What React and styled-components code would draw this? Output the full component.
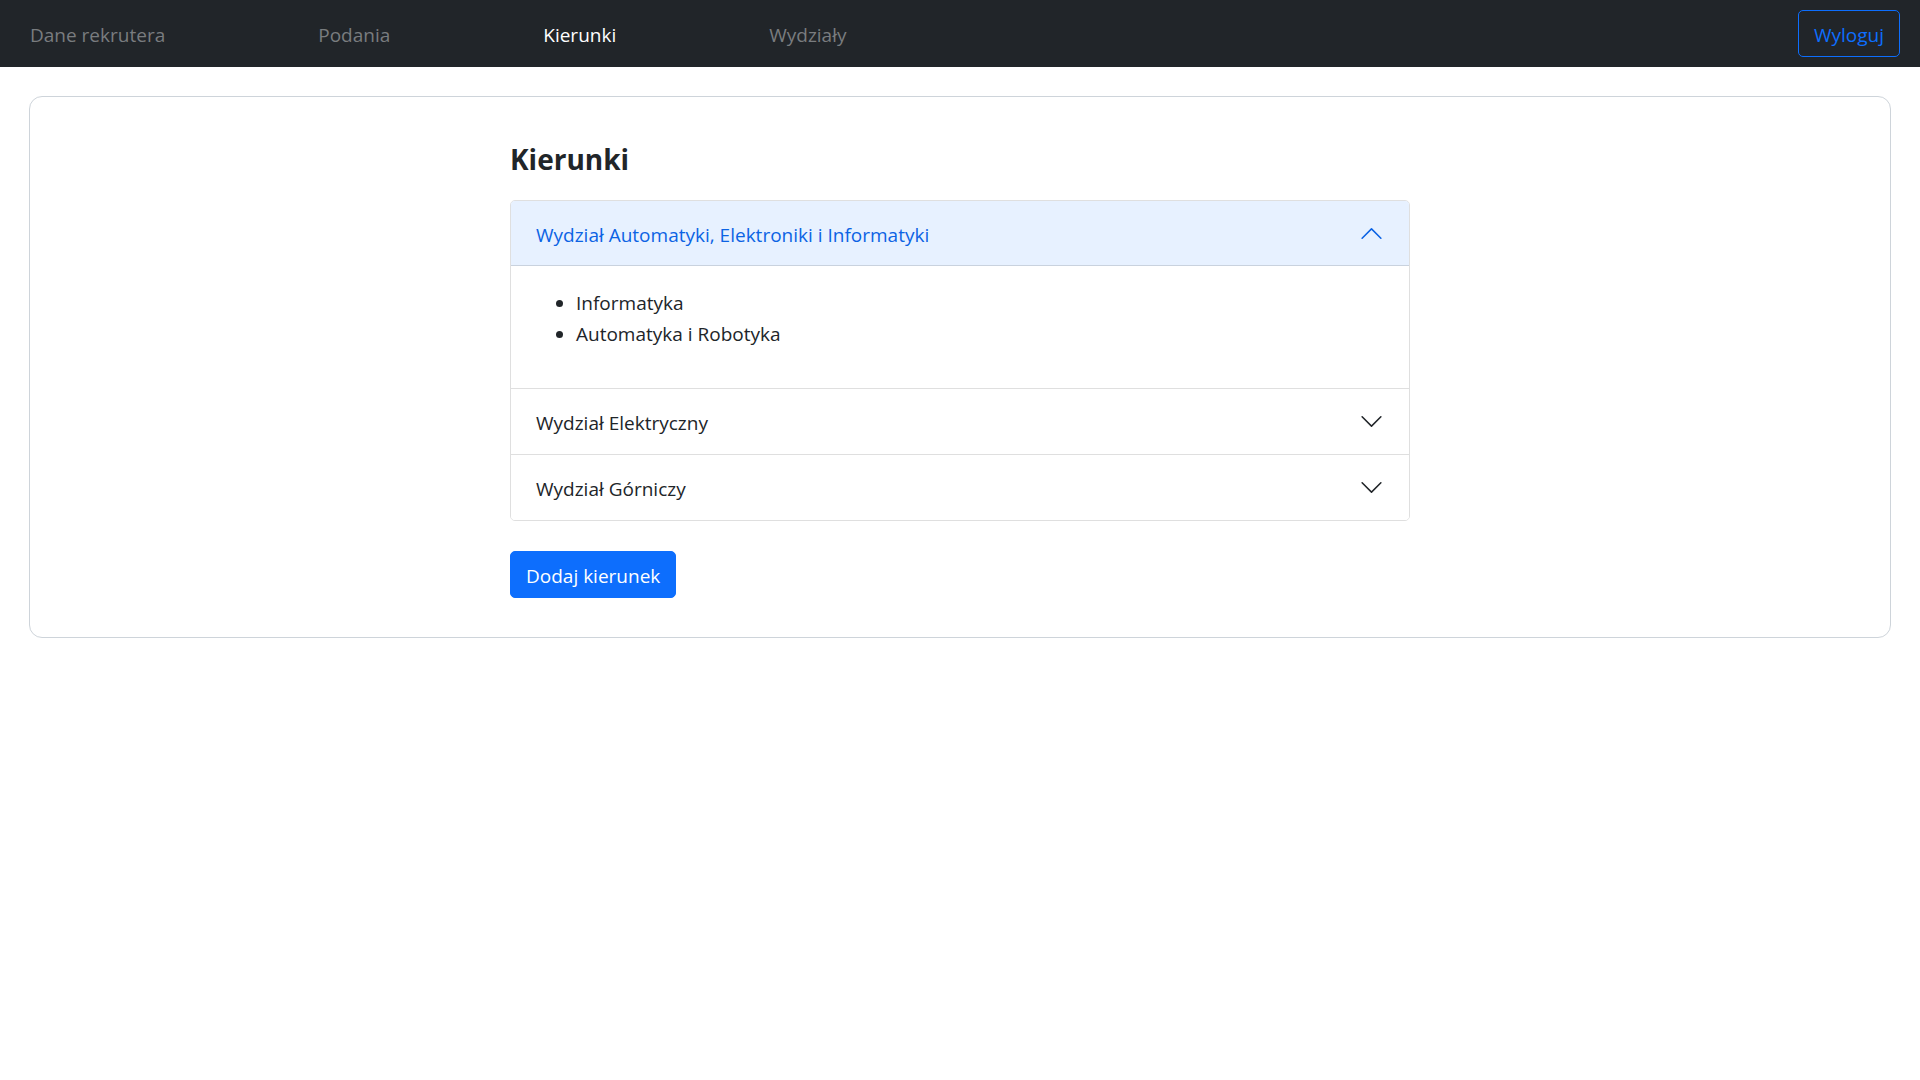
import React, { useState } from "react";
import styled, { createGlobalStyle } from "styled-components";

const GlobalStyle = createGlobalStyle`
  *, *::before, *::after { box-sizing: border-box; }
  body {
    margin: 0;
    background: #fff;
    color: #212529;
    font: 400 19px/31px "Open Sans", "Noto Sans", sans-serif;
  }
`;

const Navbar = styled.header`
  display: flex;
  align-items: center;
  justify-content: space-between;
  padding: 10px 20px 10px 30px;
  background: #212529;
`;

const NavList = styled.nav`
  display: flex;
  gap: 153px;
  padding-top: 3px;
`;

const NavLink = styled.a`
  color: ${({ $active }) => ($active ? "#fff" : "#797c7f")};
  text-decoration: none;
`;

const Button = styled.button`
  padding: 9px 15px 5px;
  border: 1px solid #0d6efd;
  border-radius: 5px;
  background: ${({ $outline }) => ($outline ? "transparent" : "#0d6efd")};
  color: ${({ $outline }) => ($outline ? "#0d6efd" : "#fff")};
  font: inherit;
  cursor: pointer;
`;

const Card = styled.main`
  margin: 29px;
  padding: 40px 24px 39px;
  border: 1px solid #ced4da;
  border-radius: 13px;
`;

const Content = styled.div`
  max-width: 900px;
  margin: 0 auto;
`;

const Title = styled.h1`
  margin: 0 0 19px;
  font-size: 28px;
  line-height: 44px;
  font-weight: 700;
`;

const Accordion = styled.div`
  margin-bottom: 30px;
  border: 1px solid #dfdfdf;
  border-radius: 5px;
  overflow: hidden;
`;

const Item = styled.section`
  & + & { border-top: 1px solid #dfdfdf; }
`;

const ItemHeading = styled.h2`
  margin: 0;
  font: inherit;
`;

const ItemButton = styled.button`
  display: flex;
  align-items: flex-start;
  justify-content: space-between;
  width: 100%;
  padding: 19px 25px 15px;
  border: 0;
  background: ${({ $open }) => ($open ? "#e7f1ff" : "#fff")};
  box-shadow: ${({ $open }) => ($open ? "inset 0 -1px 0 #c9d2de" : "none")};
  color: ${({ $open }) => ($open ? "#0c63e4" : "#212529")};
  font: inherit;
  text-align: left;
  cursor: pointer;
`;

const Chevron = styled.svg`
  width: 25px;
  height: 25px;
  margin-top: 1px;
  fill: currentColor;
  transform: ${({ $open }) => ($open ? "rotate(180deg)" : "none")};
`;

const CourseList = styled.ul`
  margin: 0;
  padding: 22px 25px 38px 65px;
`;

const links = ["Dane rekrutera", "Podania", "Kierunki", "Wydziały"];

const faculties = [
  {
    name: "Wydział Automatyki, Elektroniki i Informatyki",
    courses: ["Informatyka", "Automatyka i Robotyka"],
  },
  { name: "Wydział Elektryczny", courses: [] },
  { name: "Wydział Górniczy", courses: [] },
];

export default function App() {
  const [openIndex, setOpenIndex] = useState(0);

  return (
    <>
      <GlobalStyle />
      <Navbar>
        <NavList>
          {links.map((label) => (
            <NavLink key={label} href="#" $active={label === "Kierunki"}>
              {label}
            </NavLink>
          ))}
        </NavList>
        <Button type="button" $outline>Wyloguj</Button>
      </Navbar>
      <Card>
        <Content>
          <Title>Kierunki</Title>
          <Accordion>
            {faculties.map(({ name, courses }, index) => {
              const open = index === openIndex;
              return (
                <Item key={name}>
                  <ItemHeading>
                    <ItemButton
                      type="button"
                      aria-expanded={open}
                      $open={open}
                      onClick={() => setOpenIndex(open ? -1 : index)}
                    >
                      {name}
                      <Chevron viewBox="0 0 16 16" aria-hidden="true" $open={open}>
                        <path
                          fillRule="evenodd"
                          d="M1.646 4.646a.5.5 0 0 1 .708 0L8 10.293l5.646-5.647a.5.5 0 0 1 .708.708l-6 6a.5.5 0 0 1-.708 0l-6-6a.5.5 0 0 1 0-.708z"
                        />
                      </Chevron>
                    </ItemButton>
                  </ItemHeading>
                  {open && (
                    <CourseList>
                      {courses.map((course) => (
                        <li key={course}>{course}</li>
                      ))}
                    </CourseList>
                  )}
                </Item>
              );
            })}
          </Accordion>
          <Button type="button">Dodaj kierunek</Button>
        </Content>
      </Card>
    </>
  );
}
